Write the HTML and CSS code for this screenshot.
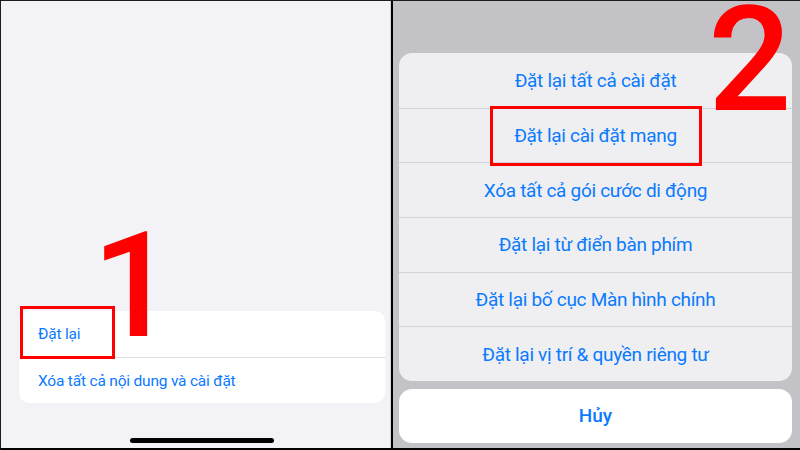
FILE: index.html
```html
<!DOCTYPE html>
<html lang="vi">
<head>
    <meta charset="UTF-8">
    <meta name="viewport" content="width=device-width, initial-scale=1.0">
    <title>Đặt lại cài đặt mạng</title>
    <link rel="stylesheet" href="styles.css">
</head>
<body>
    <div class="frame">
        <!-- Bước 1: màn hình Cài đặt chung > Đặt lại -->
        <section class="panel panel-left">
            <div class="card">
                <div class="card-row">Đặt lại</div>
                <div class="card-row">Xóa tất cả nội dung và cài đặt</div>
            </div>
            <div class="home-bar"></div>

            <div class="highlight highlight-one"></div>
            <div class="step step-one">1</div>
        </section>

        <div class="divider"></div>

        <!-- Bước 2: bảng chọn kiểu đặt lại -->
        <section class="panel panel-right">
            <div class="sheet">
                <div class="sheet-row">Đặt lại tất cả cài đặt</div>
                <div class="sheet-row">Đặt lại cài đặt mạng</div>
                <div class="sheet-row">Xóa tất cả gói cước di động</div>
                <div class="sheet-row">Đặt lại từ điển bàn phím</div>
                <div class="sheet-row">Đặt lại bố cục Màn hình chính</div>
                <div class="sheet-row">Đặt lại vị trí &amp; quyền riêng tư</div>
            </div>
            <div class="cancel">Hủy</div>

            <div class="highlight highlight-two"></div>
            <div class="step step-two">2</div>
        </section>
    </div>
</body>
</html>
```

FILE: styles.css
```css
body {
    margin: 0;
    font-family: Roboto, "Noto Sans", sans-serif;
}
.frame {
    display: flex;
    width: 800px;
    height: 450px;
    box-sizing: border-box;
    border-top: 1px solid #1c1c1e;
    border-left: 1px solid #1c1c1e;
    border-bottom: 2px solid #000;
    overflow: hidden;
}
.panel {
    position: relative;
    display: flex;
    flex-direction: column;
    box-sizing: border-box;
}
.divider {
    width: 2px;
    background: #000;
}

/* Bên trái */
.panel-left {
    width: 390px;
    background: #f2f2f7;
    border-right: 1px solid #d4d4d9;
    justify-content: flex-end;
    padding: 0 5px 5px 18px;
}
.card {
    width: 366px;
    background: #fff;
    border-radius: 10px;
    margin-bottom: 35px;
}
.card-row {
    height: 46px;
    display: flex;
    align-items: center;
    padding-left: 19px;
    font-size: 15.5px;
    letter-spacing: -0.2px;
    color: #0a7aff;
}
.card-row + .card-row {
    border-top: 1px solid #dcdce0;
    height: 45px;
}
.home-bar {
    width: 144px;
    height: 5px;
    margin: 0 auto;
    border-radius: 3px;
    background: #000;
}

/* Bên phải */
.panel-right {
    width: 407px;
    background: #c3c2c7;
    padding: 52px 8px 5px 6px;
}
.sheet {
    background: #efeff1;
    border-radius: 13px;
    margin-bottom: 8px;
}
.sheet-row {
    height: 54.67px;
    display: flex;
    align-items: center;
    justify-content: center;
    font-size: 19px;
    letter-spacing: -0.3px;
    color: #0a7aff;
}
.sheet-row + .sheet-row {
    border-top: 1px solid #d3d3d7;
    box-sizing: border-box;
}
.cancel {
    height: 54px;
    display: flex;
    align-items: center;
    justify-content: center;
    background: #fff;
    border-radius: 13px;
    font-size: 19px;
    font-weight: 500;
    color: #0a7aff;
}

/* Đánh dấu bước */
.highlight {
    position: absolute;
    box-sizing: border-box;
    border: 3px solid #f00;
}
.highlight-one {
    left: 19px;
    top: 305px;
    width: 95px;
    height: 53px;
}
.highlight-two {
    left: 97px;
    top: 105px;
    width: 212px;
    height: 60px;
}
.step {
    position: absolute;
    font-family: Roboto, sans-serif;
    font-size: 147px;
    font-weight: 500;
    line-height: 0.8;
    color: #f00;
}
.step-one {
    left: 91px;
    top: 227px;
}
.step-two {
    left: 315px;
    top: 1px;
}
```
